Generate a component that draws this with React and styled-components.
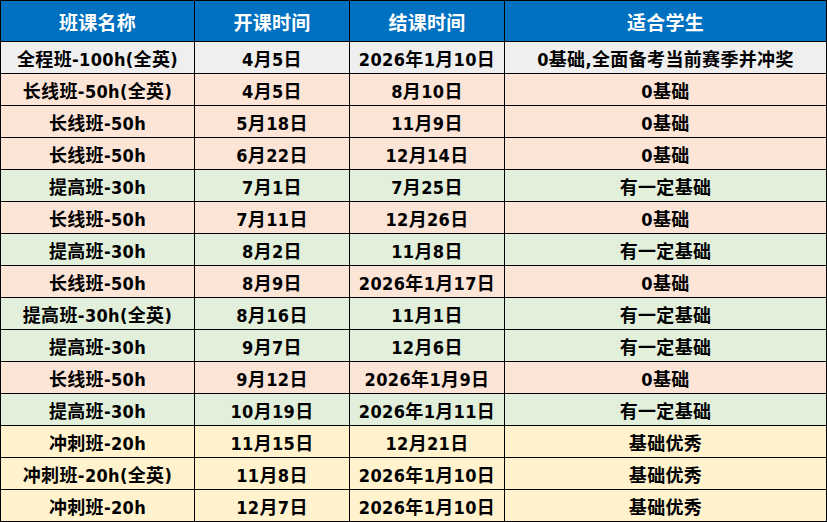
import React from 'react'
import styled, {createGlobalStyle} from 'styled-components'

const GlobalStyle = createGlobalStyle`
    html, body {
        margin: 0;
        padding: 0;
        background: #fff;
    }
`

const tones = {
    gray: '#efefef',
    peach: '#fce4d6',
    green: '#e2efda',
    yellow: '#fff2cc',
}

const Table = styled.div`
    display: grid;
    grid-template-columns: 193px 154px 154px 321px;
    grid-template-rows: 40px repeat(15, 31px);
    gap: 1px;
    padding: 1px;
    width: 827px;
    box-sizing: border-box;
    background: #000;
    font-family: "DejaVu Sans Condensed", "DejaVu Sans", "Noto Sans CJK SC", sans-serif;
    font-weight: 700;
`

const Row = styled.div`
    display: contents;
`

const HeaderCell = styled.div`
    background: #0070c0;
    color: #fff;
    font-size: 19px;
    letter-spacing: 0.3px;
    display: flex;
    align-items: center;
    justify-content: center;
    font-family: "Noto Sans CJK SC", sans-serif;
`

const Cell = styled.div`
    background: ${p => tones[p.$tone]};
    color: #000;
    font-size: 18px;
    letter-spacing: 0.35px;
    display: flex;
    align-items: center;
    justify-content: center;
    white-space: nowrap;
`

const rows = [
    ['全程班-100h(全英)', '4月5日', '2026年1月10日', '0基础,全面备考当前赛季并冲奖', 'gray'],
    ['长线班-50h(全英)', '4月5日', '8月10日', '0基础', 'peach'],
    ['长线班-50h', '5月18日', '11月9日', '0基础', 'peach'],
    ['长线班-50h', '6月22日', '12月14日', '0基础', 'peach'],
    ['提高班-30h', '7月1日', '7月25日', '有一定基础', 'green'],
    ['长线班-50h', '7月11日', '12月26日', '0基础', 'peach'],
    ['提高班-30h', '8月2日', '11月8日', '有一定基础', 'green'],
    ['长线班-50h', '8月9日', '2026年1月17日', '0基础', 'peach'],
    ['提高班-30h(全英)', '8月16日', '11月1日', '有一定基础', 'green'],
    ['提高班-30h', '9月7日', '12月6日', '有一定基础', 'green'],
    ['长线班-50h', '9月12日', '2026年1月9日', '0基础', 'peach'],
    ['提高班-30h', '10月19日', '2026年1月11日', '有一定基础', 'green'],
    ['冲刺班-20h', '11月15日', '12月21日', '基础优秀', 'yellow'],
    ['冲刺班-20h(全英)', '11月8日', '2026年1月10日', '基础优秀', 'yellow'],
    ['冲刺班-20h', '12月7日', '2026年1月10日', '基础优秀', 'yellow'],
]

const headers = ['班课名称', '开课时间', '结课时间', '适合学生']

export default function App() {
    return <>
        <GlobalStyle/>
        <Table>
            <Row>
                {headers.map(h => <HeaderCell key={h}>{h}</HeaderCell>)}
            </Row>
            {rows.map((r, i) => (
                <Row key={i}>
                    {r.slice(0, 4).map((c, j) => <Cell key={j} $tone={r[4]}>{c}</Cell>)}
                </Row>
            ))}
        </Table>
    </>
}
